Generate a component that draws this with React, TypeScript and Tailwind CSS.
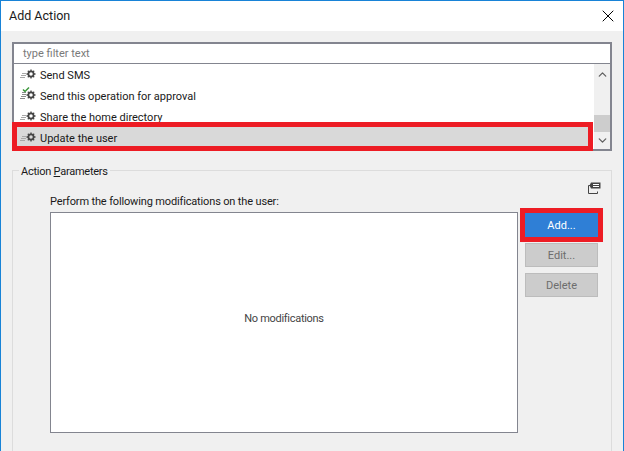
import { X, ChevronUp, ChevronDown } from 'lucide-react';

function ActionIcon({ check }: { check?: boolean }) {
  return (
    <svg width="18" height="16" viewBox="0 0 18 16" className="-mt-[1px] shrink-0">
      <path d="M3 7.5h4M2 9.5h5M1 11.5h5" stroke={check ? '#8a8a8a' : '#a8a8a8'} strokeWidth="1" fill="none" />
      {check && <path d="M3 5.5h4M4 3.5h2" stroke="#8a8a8a" strokeWidth="1" fill="none" />}
      <circle cx="12" cy="8" r="2.6" fill="none" stroke="#444" strokeWidth="1.7" />
      <path d="M12 3.5v1.5M12 11v1.5M7.5 8h1.5M15 8h1.5M8.8 4.8l1.1 1.1M14.1 10.1l1.1 1.1M15.2 4.8l-1.1 1.1M9.9 10.1l-1.1 1.1" stroke="#444" strokeWidth="1.3" fill="none" />
      {check && <path d="M4 2.5l2 2 4-4" stroke="#3f9a3f" strokeWidth="1.5" fill="none" />}
    </svg>
  );
}

function Row({ label, check }: { label: string; check?: boolean }) {
  return (
    <div className="flex h-[21px] items-center pl-[5px]">
      <ActionIcon check={check} />
      <span className="ml-[3px] mt-[4px]">{label}</span>
    </div>
  );
}

export default function App() {
  return (
    <div className="h-[451px] w-[624px] overflow-hidden border-l border-t border-r border-[#1883d7] bg-[#f0f0f0] text-[11px] text-[#1a1a1a] [font-family:Roboto,'Liberation_Sans',sans-serif]">
      <div className="flex h-[30px] items-center justify-between bg-white pl-2 pr-[5px]">
        <span className="text-[12.5px]">Add Action</span>
        <X size={20} strokeWidth={1.2} className="text-black" />
      </div>
      <div className="px-[11px] pt-[11px]">
        <div className="relative h-[109px] border-2 border-[#83858f] bg-white">
          <div className="flex h-[20px] items-center border-b border-[#83858f] pl-[9px] pt-[2px] text-[#7a7a7a]">type filter text</div>
          <div className="flex h-[85px]">
            <div className="flex-1">
              <Row label="Send SMS" />
              <Row label="Send this operation for approval" check />
              <Row label="Share the home directory" />
              <div className="relative bg-[#d9d9d9]">
                <Row label="Update the user" />
                <div className="absolute -left-[2px] -top-[5px] h-[29px] w-[581px] border-[5px] border-[#ed1c24]" />
              </div>
            </div>
            <div className="flex w-[17px] flex-col items-center border-l border-white bg-[#f0f0f0] text-[#606060]">
              <ChevronUp size={13} strokeWidth={2.4} className="mt-[4px]" />
              <div className="mt-[34px] h-[17px] w-full bg-[#cdcdcd]" />
              <ChevronDown size={13} strokeWidth={2.4} className="mt-[2px]" />
            </div>
          </div>
        </div>
        <div className="mt-[19px] h-[299px] border border-[#dcdcdc] pl-[37px] pr-[9px]">
          <div className="-ml-[31px] -mt-[10px] flex h-[20px] w-fit items-center bg-[#f0f0f0] px-[2px] pt-[2px] tracking-[-0.25px]">
            <span>Action <u>P</u>arameters</span>
          </div>
          <div className="flex h-[12px] justify-end">
            <svg width="15" height="14" viewBox="0 0 15 14">
              <path d="M1.5 4.5v8h9v-2M1.5 4.5h3" stroke="#444" strokeWidth="1" fill="none" />
              <path d="M4 1.5h9.5v6H4L2.5 4.5z" fill="#444" />
              <path d="M6 3.5h6M6 5.5h6" stroke="#fff" strokeWidth="1" />
            </svg>
          </div>
          <div className="h-[16px] leading-[18px] tracking-[-0.15px]">Perform the following modifications on the user:</div>
          <div className="mt-[3px] flex">
            <div className="flex h-[221px] w-[468px] items-center justify-center border border-[#83858f] bg-white pb-[6px] tracking-[-0.3px] text-[#444]">No modifications</div>
            <div className="ml-[7px] flex flex-col gap-[6px] pt-[1px]">
              <div className="relative">
                <button className="block h-[24px] w-[73px] bg-[#2f7fd6] pt-[2px] text-white">Add...</button>
                <div className="absolute -left-[5px] -top-[5px] h-[34px] w-[83px] border-[5px] border-[#ed1c24]" />
              </div>
              <button className="block h-[24px] w-[73px] border border-[#bcbcbc] bg-[#cccccc] pt-[2px] text-[#6d6d6d]">Edit...</button>
              <button className="block h-[24px] w-[73px] border border-[#bcbcbc] bg-[#cccccc] pt-[2px] text-[#6d6d6d]">Delete</button>
            </div>
          </div>
        </div>
      </div>
    </div>
  );
}
